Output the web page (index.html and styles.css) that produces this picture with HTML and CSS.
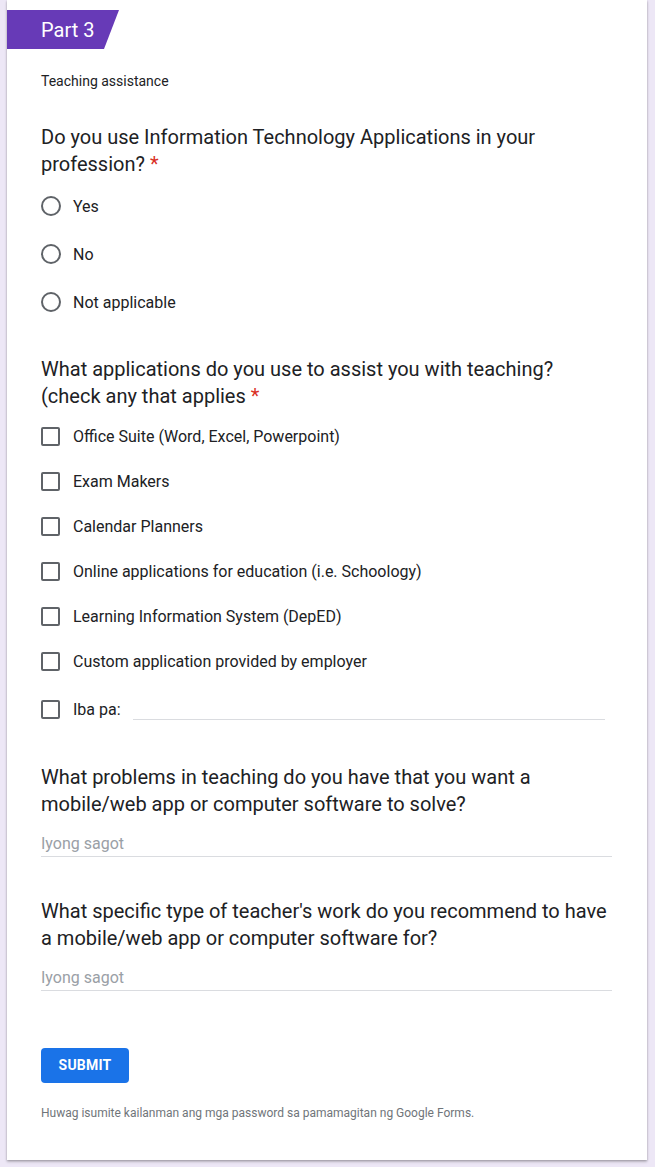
FILE: index.html
```html
<!DOCTYPE html>
<html>
<head>
<meta charset="utf-8">
<link rel="stylesheet" href="styles.css">
</head>
<body>
<div class="card">
  <div class="tab">Part 3</div>
  <div class="desc">Teaching assistance</div>

  <div class="question q1">
    <div class="qtitle"><span class="qtext">Do you use Information Technology Applications in your profession?</span> <span class="req">*</span></div>
    <div class="opts">
      <div class="opt radio-row"><span class="radio"></span><span class="label">Yes</span></div>
      <div class="opt radio-row"><span class="radio"></span><span class="label">No</span></div>
      <div class="opt radio-row"><span class="radio"></span><span class="label">Not applicable</span></div>
    </div>
  </div>

  <div class="question q2">
    <div class="qtitle"><span class="qtext">What applications do you use to assist you with teaching? (check any that applies</span> <span class="req">*</span></div>
    <div class="opts">
      <div class="opt check-row"><span class="check"></span><span class="label">Office Suite (Word, Excel, Powerpoint)</span></div>
      <div class="opt check-row"><span class="check"></span><span class="label">Exam Makers</span></div>
      <div class="opt check-row"><span class="check"></span><span class="label">Calendar Planners</span></div>
      <div class="opt check-row"><span class="check"></span><span class="label">Online applications for education (i.e. Schoology)</span></div>
      <div class="opt check-row"><span class="check"></span><span class="label">Learning Information System (DepED)</span></div>
      <div class="opt check-row"><span class="check"></span><span class="label">Custom application provided by employer</span></div>
      <div class="opt other-row"><span class="check"></span><span class="label">Iba pa:</span><span class="other-line"></span></div>
    </div>
  </div>

  <div class="question q3">
    <div class="qtitle">What problems in teaching do you have that you want a mobile/web app or computer software to solve?</div>
    <div class="answer">Iyong sagot</div>
  </div>

  <div class="question q4">
    <div class="qtitle">What specific type of teacher's work do you recommend to have a mobile/web app or computer software for?</div>
    <div class="answer">Iyong sagot</div>
  </div>

  <div class="submit-wrap"><span class="submit">SUBMIT</span></div>
  <div class="footer">Huwag isumite kailanman ang mga password sa pamamagitan ng Google Forms.</div>
</div>
</body>
</html>
```

FILE: styles.css
```css
html, body {
  margin: 0;
  padding: 0;
}
body {
  background: #ede7f6;
  font-family: Roboto, "Liberation Sans", Arial, sans-serif;
  color: #202124;
  height: 1167px;
  overflow: hidden;
}
.card {
  margin-left: 7px;
  width: 640px;
  height: 1160px;
  box-sizing: border-box;
  background: #fff;
  box-shadow: 0 1px 2px rgba(0,0,0,0.25), 0 2px 3px rgba(0,0,0,0.15);
  padding: 10px 35px 0 34px;
}
.tab {
  margin-left: -34px;
  width: 112px;
  height: 39px;
  box-sizing: border-box;
  background: #673ab7;
  color: #fff;
  font-size: 20px;
  line-height: 40px;
  padding-left: 34px;
  clip-path: polygon(0 0, 100% 0, calc(100% - 15px) 100%, 0 100%);
}
.desc {
  margin-top: 23px;
  font-size: 14px;
  line-height: 18px;
}
.qtitle {
  font-size: 20px;
  line-height: 27px;
}
.req {
  color: #d93025;
}
.q1 {
  margin-top: 34px;
}
.q1 .opts {
  margin-top: 4px;
}
.opt {
  display: flex;
  align-items: center;
  font-size: 16px;
}
.radio-row {
  height: 48px;
}
.check-row {
  height: 45px;
}
.other-row {
  height: 51px;
}
.radio {
  width: 20px;
  height: 20px;
  box-sizing: border-box;
  border: 2px solid #5f6368;
  border-radius: 50%;
  flex: none;
}
.check {
  width: 19px;
  height: 19px;
  box-sizing: border-box;
  border: 2px solid #5f6368;
  border-radius: 2px;
  flex: none;
}
.label {
  margin-left: 12px;
}
.check-row .label, .other-row .label {
  margin-left: 13px;
}
.other-line {
  flex: none;
  width: 472px;
  margin-left: 12px;
  margin-top: 20px;
  border-bottom: 1px solid #dadce0;
}
.q2 {
  margin-top: 30px;
}
.q2 .opts {
  margin-top: 4px;
}
.q3 {
  margin-top: 29px;
}
.q4 {
  margin-top: 41px;
}
.answer {
  margin-top: 16px;
  font-size: 16px;
  line-height: 20px;
  color: #9aa0a6;
  padding-bottom: 2px;
  border-bottom: 1px solid #dadce0;
}
.submit-wrap {
  margin-top: 57px;
}
.submit {
  display: inline-block;
  background: #1a73e8;
  color: #fff;
  font-weight: bold;
  font-size: 14px;
  letter-spacing: 0.2px;
  width: 88px;
  height: 35px;
  line-height: 35px;
  text-align: center;
  border-radius: 4px;
}
.footer {
  margin-top: 23px;
  font-size: 12px;
  line-height: 14px;
  color: #70757a;
}
```
